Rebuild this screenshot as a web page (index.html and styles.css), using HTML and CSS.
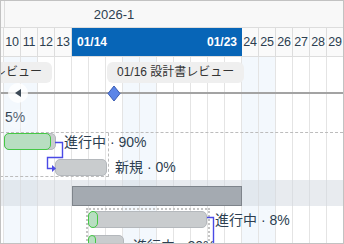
FILE: index.html
```html
<!DOCTYPE html>
<html lang="ja">

<head>
  <meta charset="utf-8">
  <title>Gantt</title>
  <link rel="stylesheet" href="styles.css">
</head>

<body>
  <div class="gantt">
    <div class="month">
      <div class="monthcell">2026-1</div>
    </div>

    <div class="days">
      <div class="day"></div>
      <div class="day">10</div>
      <div class="day">11</div>
      <div class="day">12</div>
      <div class="day">13</div>
      <div class="range">
        <span>01/14</span>
        <span>01/23</span>
      </div>
      <div class="day">24</div>
      <div class="day">25</div>
      <div class="day">26</div>
      <div class="day">27</div>
      <div class="day">28</div>
      <div class="day">29</div>
    </div>

    <div class="chart">
      <!-- background columns, one per day starting at 01/09 -->
      <div class="grid">
        <div class="col"></div>
        <div class="col weekend"></div>
        <div class="col weekend"></div>
        <div class="col"></div>
        <div class="col"></div>
        <div class="col"></div>
        <div class="col"></div>
        <div class="col"></div>
        <div class="col weekend"></div>
        <div class="col weekend"></div>
        <div class="col"></div>
        <div class="col"></div>
        <div class="col"></div>
        <div class="col"></div>
        <div class="col"></div>
        <div class="col weekend"></div>
        <div class="col weekend"></div>
        <div class="col"></div>
        <div class="col"></div>
        <div class="col"></div>
        <div class="col"></div>
      </div>

      <div class="milestones">
        <div class="pill" style="right:291px">01/09 要件レビュー</div>
        <div class="pill" style="left:106px">01/16 設計書レビュー</div>
        <div class="msline"></div>
        <div class="scroller" style="top:26px">
          <svg width="6" height="8" viewBox="0 0 6 8"><polygon points="6,0 6,8 0,4" fill="#3d4a57"/></svg>
        </div>
        <svg class="diamond" style="left:106px" width="14" height="17" viewBox="0 0 14 17">
          <polygon points="7,1 13,8.5 7,16 1,8.5" fill="#5b85e8" stroke="#3a5cb3" stroke-width="1"/>
        </svg>
        <div class="label" style="left:4px;top:51px">5%</div>
        <div class="scroller faint" style="top:52px"></div>
      </div>

      <div class="group">
        <div class="groupbox"></div>
        <div class="bar" style="left:3px;top:0;width:52px">
          <div class="progress" style="width:47px"></div>
        </div>
        <div class="label" style="left:63px;top:0">進行中 · 90%</div>
        <div class="bar" style="left:54px;top:26px;width:52px"></div>
        <div class="label" style="left:114px;top:25px">新規 · 0%</div>
        <svg class="link" width="120" height="45">
          <path d="M54 9.5H61.5V24.5H46.5V35.5H52" fill="none" stroke="#4a4ae6" stroke-width="1.4"/>
          <polygon points="51,32 55,35.5 51,39" fill="#4a4ae6"/>
        </svg>
      </div>

      <div class="summary">
        <div class="sumbar" style="left:71px;width:170px"></div>
      </div>

      <div class="sub">
        <div class="subbox"></div>
        <div class="bar" style="left:87px;top:5px;width:119px">
          <div class="progress" style="width:10px"></div>
        </div>
        <div class="label" style="left:214px;top:5px">進行中 · 8%</div>
        <div class="bar" style="left:87px;top:29px;width:36px">
          <div class="progress" style="width:8px"></div>
        </div>
        <div class="label" style="left:132px;top:31px">進行中 · 20%</div>
        <svg class="link" width="300" height="40">
          <path d="M206 11.5H212.5V40" fill="none" stroke="#4a4ae6" stroke-width="1.4"/>
        </svg>
      </div>
    </div>
  </div>
</body>

</html>
```

FILE: styles.css
```css
html {
  background-color: #ffffff;
}

body {
  margin: 0;
  font-family: "Liberation Sans", "Noto Sans CJK JP", sans-serif;
  color: #2c3e50;
}

.gantt {
  width: 344px;
  height: 244px;
  box-sizing: border-box;
  border: 1px solid #c2c2c2;
  overflow: hidden;
  background-color: #ffffff;
}

.month {
  height: 26px;
  border-bottom: 1px solid #dddddd;
  background-color: #f8f8f8;
}

.monthcell {
  margin-left: 3px;
  width: 218px;
  height: 26px;
  border-left: 1px solid #dddddd;
  text-align: center;
  line-height: 27px;
  font-size: 13px;
}

.days {
  display: flex;
  height: 28px;
  margin-left: -14px;
  border-bottom: 1px solid #dddddd;
  background-color: #fafafa;
}

.day {
  flex: 0 0 17px;
  box-sizing: border-box;
  border-right: 1px solid #dddddd;
  text-align: center;
  line-height: 29px;
  font-size: 12.5px;
  letter-spacing: -0.3px;
}

.range {
  flex: 0 0 170px;
  box-sizing: border-box;
  display: flex;
  justify-content: space-between;
  padding: 0 5px;
  background-color: #0765b7;
  color: #ffffff;
  font-weight: bold;
  font-size: 12px;
  line-height: 29px;
}

.chart {
  position: relative;
  height: 186px;
}

.grid {
  position: absolute;
  top: 0;
  bottom: 0;
  left: -14px;
  display: flex;
}

.col {
  flex: 0 0 17px;
  box-sizing: border-box;
  border-right: 1px solid #e4e4e4;
}

.weekend {
  background-color: #f3f8fd;
}

.milestones,
.group,
.summary,
.sub {
  position: relative;
}

.milestones {
  height: 75px;
}

.pill {
  position: absolute;
  top: 5px;
  height: 21px;
  padding: 0 10px;
  border-radius: 6px;
  background-color: #efefef;
  color: #333333;
  font-size: 12px;
  line-height: 21px;
  white-space: nowrap;
}

.msline {
  position: absolute;
  left: 0;
  right: 0;
  top: 35px;
  height: 2px;
  background-color: #a3a3a3;
}

.diamond {
  position: absolute;
  top: 28px;
}

.scroller {
  position: absolute;
  left: 7px;
  width: 20px;
  height: 20px;
  border-radius: 50%;
  background-color: rgba(255, 255, 255, 0.8);
  display: flex;
  align-items: center;
  justify-content: center;
}

.faint {
  background-color: rgba(255, 255, 255, 0.2);
}

.label {
  position: absolute;
  font-size: 14px;
  line-height: 18px;
  white-space: nowrap;
}

.group {
  height: 45px;
  border-top: 1px dashed #bcbcbc;
}

.groupbox {
  position: absolute;
  left: -1px;
  top: 0;
  width: 108px;
  height: 43px;
  border-right: 1px dashed #bcbcbc;
  border-bottom: 1px dashed #bcbcbc;
}

.bar {
  position: absolute;
  height: 17px;
  box-sizing: border-box;
  border: 1px solid #b4b8bc;
  border-radius: 5px;
  background-color: #c9ccce;
}

.progress {
  height: 17px;
  margin: -1px;
  box-sizing: border-box;
  border: 1.5px solid #45c845;
  border-radius: 5px;
  background-color: #b8dec1;
}

.link {
  position: absolute;
  left: 0;
  top: 0;
  overflow: visible;
}

.summary {
  margin-top: 2px;
  height: 26px;
  background-color: rgba(210, 216, 224, 0.5);
}

.sumbar {
  position: absolute;
  top: 6px;
  height: 20px;
  box-sizing: border-box;
  border: 1px solid #7e848b;
  background-color: #a4aab1;
}

.sub {
  height: 38px;
}

.subbox {
  position: absolute;
  left: 85px;
  top: 2px;
  width: 124px;
  height: 60px;
  box-sizing: border-box;
  border: 2px dotted #c4c4c4;
}
```
